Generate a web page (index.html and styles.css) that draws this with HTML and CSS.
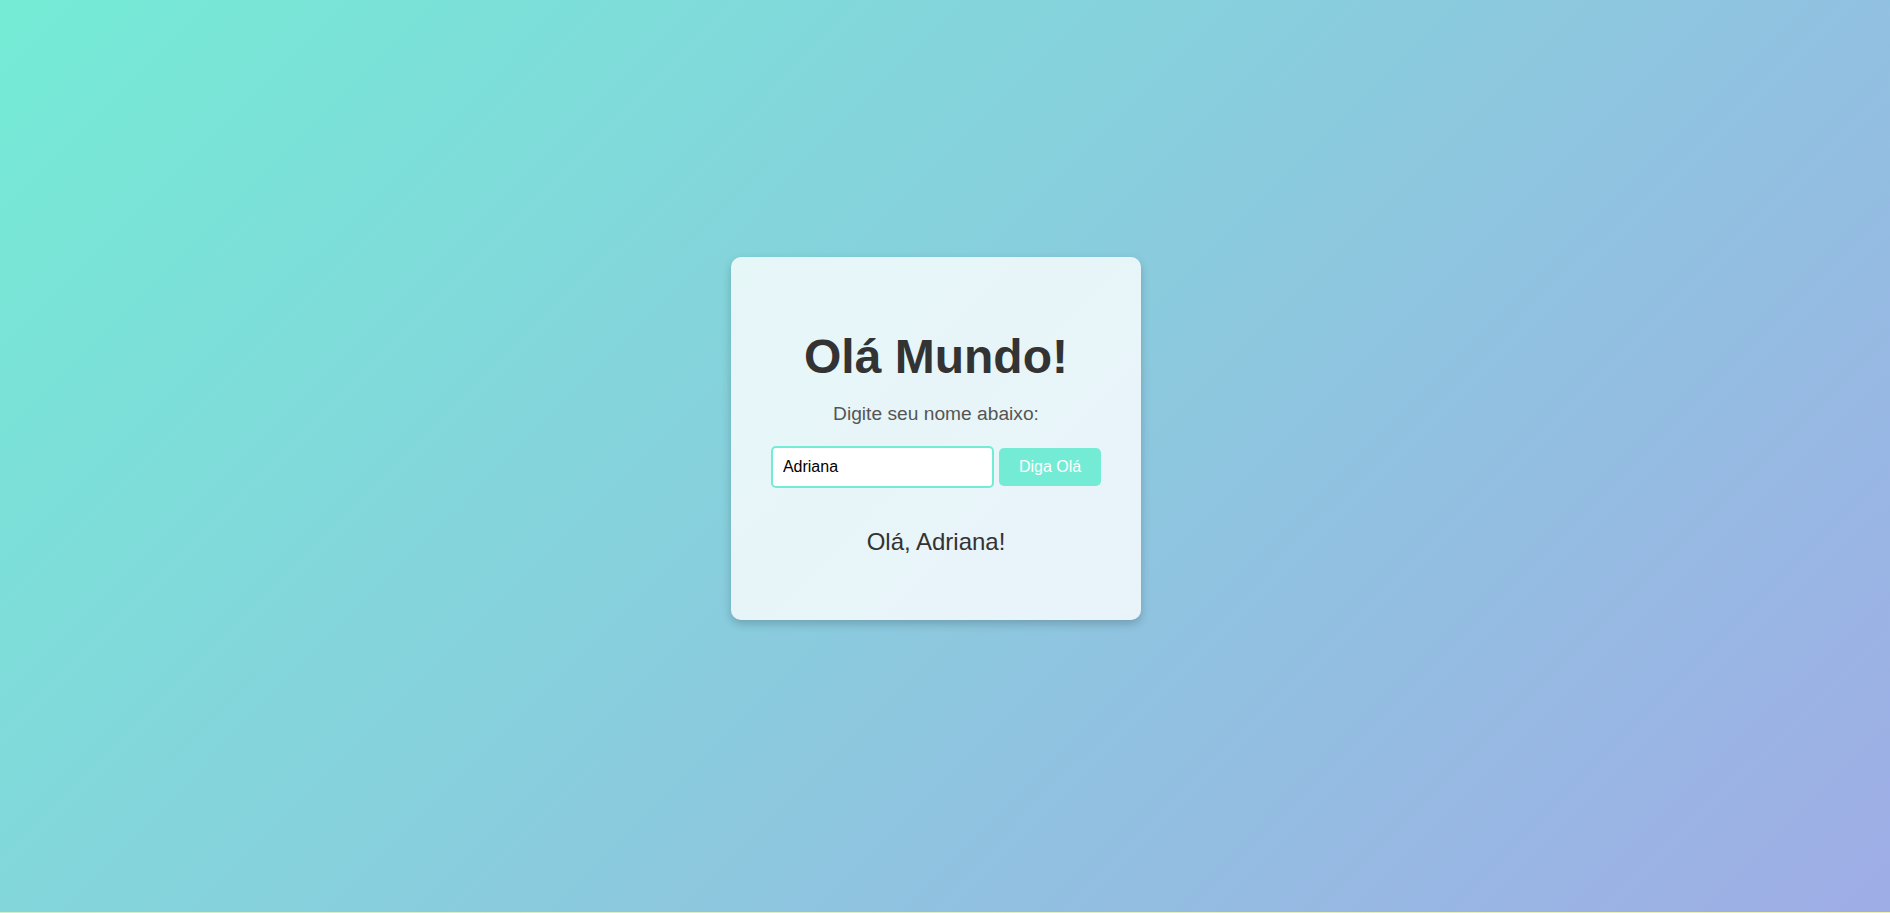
FILE: index.html
```html
<!DOCTYPE html>
<html lang="pt-BR">
<head>
<meta charset="utf-8">
<title>Olá Mundo</title>
<link rel="stylesheet" href="styles.css">
</head>
<body>
  <main class="card">
    <h1 class="title">Olá Mundo!</h1>
    <p class="subtitle">Digite seu nome abaixo:</p>
    <div class="form-row">
      <input class="name-input" type="text" value="Adriana">
      <button class="say-btn" type="button">Diga Olá</button>
    </div>
    <p class="greeting">Olá, Adriana!</p>
  </main>
</body>
</html>
```
FILE: styles.css
```css
html {
  margin: 0;
  height: 100%;
  background: linear-gradient(90deg, #d2efc8, #e2f0bc, #f2f2a0);
}

body {
  margin: 0;
  height: calc(100vh - 1px);
  box-sizing: border-box;
  padding: 0 18px 36px 0;
  display: flex;
  align-items: center;
  justify-content: center;
  background: linear-gradient(135deg, #74ebd5, #9face6);
  font-family: "Liberation Sans", Arial, sans-serif;
}

.card {
  width: 410px;
  box-sizing: border-box;
  padding: 40px 20px 64px;
  background: rgba(255, 255, 255, 0.8);
  border-radius: 10px;
  box-shadow: 0 4px 10px rgba(0, 0, 0, 0.2);
  text-align: center;
}

.title {
  margin: 32px 0 19px;
  font-size: 48px;
  font-weight: bold;
  line-height: normal;
  color: #333;
}

.subtitle {
  margin: 0 0 21px;
  font-size: 19.2px;
  line-height: normal;
  color: #555;
}

.form-row {
  display: flex;
  justify-content: center;
  align-items: center;
  gap: 5px;
  margin-bottom: 40px;
}

.name-input {
  flex: none;
  width: 199px;
  margin: 0;
  padding: 10px;
  border: 2px solid #74ebd5;
  border-radius: 5px;
  font-family: "Liberation Sans", Arial, sans-serif;
  font-size: 16px;
  color: #000;
  background: #fff;
  outline: none;
}

.say-btn {
  flex: none;
  white-space: nowrap;
  margin: 0;
  padding: 10px 20px;
  border: none;
  border-radius: 5px;
  background: #74ebd5;
  color: #fff;
  font-family: "Liberation Sans", Arial, sans-serif;
  font-size: 16px;
  cursor: pointer;
}

.greeting {
  margin: 0;
  font-size: 24px;
  line-height: normal;
  color: #333;
}
```
